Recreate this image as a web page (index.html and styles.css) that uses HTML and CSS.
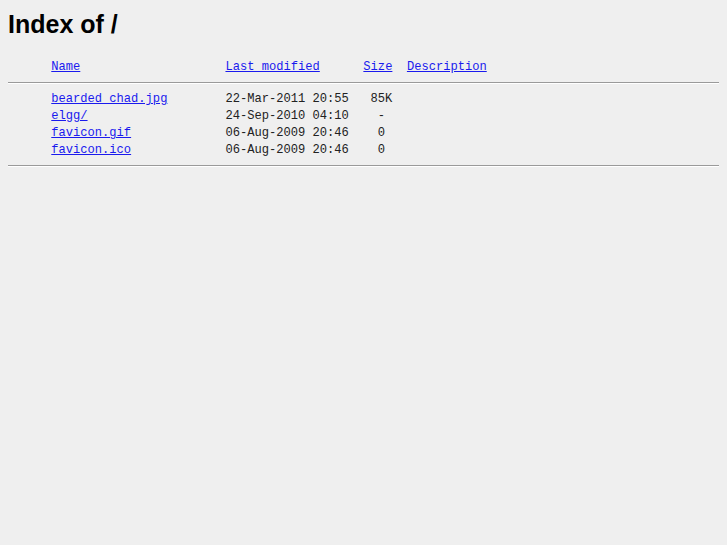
FILE: index.html
```html
<!DOCTYPE html>
<html>
<head>
<meta charset="utf-8">
<title>Index of /</title>
<link rel="stylesheet" href="styles.css">
</head>
<body>
<h1 class="title">Index of /</h1>
<pre class="listing"><span class="ico"></span> <a href="#">Name</a>                    <a href="#">Last modified</a>      <a href="#">Size</a>  <a href="#">Description</a><hr class="rule"><span class="ico"></span> <a href="#">bearded chad.jpg</a>        22-Mar-2011 20:55   85K  
<span class="ico"></span> <a href="#">elgg/</a>                   24-Sep-2010 04:10    -   
<span class="ico"></span> <a href="#">favicon.gif</a>             06-Aug-2009 20:46    0   
<span class="ico"></span> <a href="#">favicon.ico</a>             06-Aug-2009 20:46    0   
<hr class="rule"></pre>
</body>
</html>
```
FILE: styles.css
```css
html, body {
  background: #efefef;
}
body {
  margin: 8px;
  color: #000;
}
.title {
  font-family: "Liberation Sans", Arial, sans-serif;
  font-weight: bold;
  font-size: 25px;
  line-height: 28px;
  margin: 2px 0 21px 0;
}
.listing {
  font-family: "Liberation Mono", "Courier New", monospace;
  font-size: 12.1px;
  line-height: 17px;
  margin: 0;
  color: #222;
}
.listing a {
  color: #1a1aee;
}
.ico {
  display: inline-block;
  width: 36px;
  height: 0;
}
.rule {
  border: 0;
  border-top: 1px solid #9a9a9a;
  border-bottom: 1px solid #fff;
  margin: 6px 0 7px 0;
  height: 0;
}
```
